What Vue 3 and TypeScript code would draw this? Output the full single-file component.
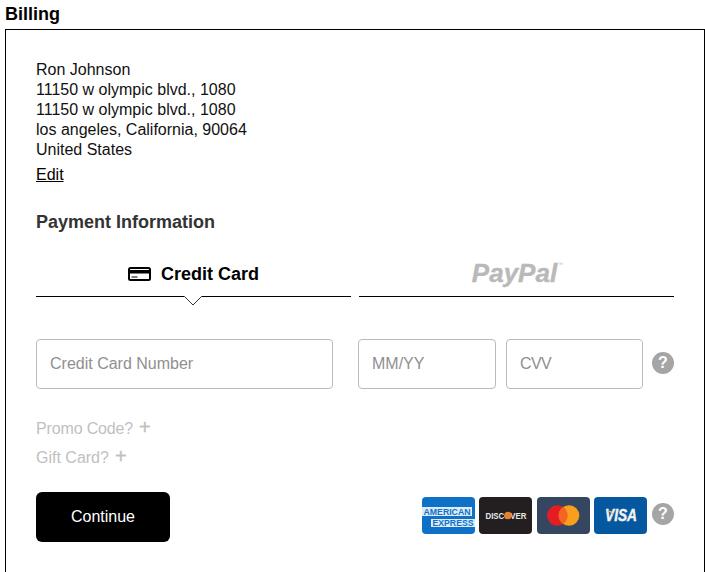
<script setup lang="ts">
const address: string[] = [
  'Ron Johnson',
  '11150 w olympic blvd., 1080',
  '11150 w olympic blvd., 1080',
  'los angeles, California, 90064',
  'United States',
]
</script>

<template>
  <div class="page">
    <h1 class="title">Billing</h1>
    <section class="box">
      <div class="address">
        <div v-for="(line, i) in address" :key="i">{{ line }}</div>
      </div>
      <a class="edit">Edit</a>
      <h2 class="subtitle">Payment Information</h2>

      <div class="tabs">
        <div class="tab active">
          <svg class="card-icon" width="23" height="14" viewBox="0 0 23 14">
            <rect x="1" y="1" width="21" height="12" rx="1.5" fill="#fff" stroke="#000" stroke-width="2" />
            <rect x="1" y="3" width="21" height="3.5" fill="#000" />
            <rect x="3.5" y="9.5" width="6" height="1" fill="#000" />
          </svg>
          <span>Credit Card</span>
          <svg class="caret" width="18" height="10" viewBox="0 0 18 10">
            <path d="M0 0 L9 9 L18 0" fill="#fff" stroke="none" />
            <path d="M0.5 0.5 L9 9 L17.5 0.5" fill="none" stroke="#333" stroke-width="1" />
          </svg>
        </div>
        <div class="tab">
          <span class="paypal">PayPal</span><span class="tm">™</span>
        </div>
      </div>

      <div class="fields">
        <div class="input number">Credit Card Number</div>
        <div class="input expiry">MM/YY</div>
        <div class="input cvv"><span class="cvv-text">CVV</span></div>
        <span class="help">?</span>
      </div>

      <div class="extra first"><span class="promo">Promo Code?</span><span class="plus">+</span></div>
      <div class="extra"><span>Gift Card?</span><span class="plus">+</span></div>

      <div class="footer">
        <button class="continue" type="button">Continue</button>
        <div class="cards">
          <svg class="pay" width="53" height="37" viewBox="0 0 53 37">
            <rect width="53" height="37" rx="4" fill="#0f70c8" />
            <rect x="0" y="10" width="50" height="9" fill="#dcebf8" />
            <text x="25" y="17.800" text-anchor="middle" class="amex" textLength="47" lengthAdjust="spacingAndGlyphs">AMERICAN</text>
            <rect x="9" y="22" width="44" height="8" fill="#dcebf8" />
            <text x="31" y="29.200" text-anchor="middle" class="amex" textLength="41" lengthAdjust="spacingAndGlyphs">EXPRESS</text>
          </svg>
          <svg class="pay" width="53" height="37" viewBox="0 0 53 37">
            <rect width="53" height="37" rx="4" fill="#231f20" />
            <text x="27" y="21.800" text-anchor="middle" class="disc" textLength="41" lengthAdjust="spacingAndGlyphs">DISCOVER</text>
            <circle cx="29" cy="18.500" r="3.700" fill="#e9812b" />
          </svg>
          <svg class="pay" width="53" height="37" viewBox="0 0 53 37">
            <rect width="53" height="37" rx="4" fill="#354760" />
            <circle cx="20.300" cy="18.500" r="10.300" fill="#e61c24" />
            <circle cx="32" cy="18.500" r="10.300" fill="#f99f1b" />
            <path d="M26.150 10a10.300 10.300 0 0 1 0 17a10.300 10.300 0 0 1 0-17z" fill="#f26522" />
          </svg>
          <svg class="pay" width="53" height="37" viewBox="0 0 53 37">
            <rect width="53" height="37" rx="4" fill="#05589f" />
            <text x="27" y="24.300" text-anchor="middle" class="visa" textLength="32" lengthAdjust="spacingAndGlyphs">VISA</text>
            <path d="M10.500 13.800 C14 13.800 17.500 15.200 19.500 19 L18 14.800 C17.600 14 16.800 13.800 15.800 13.800z" fill="#e0b060" />
          </svg>
          <span class="help after-cards">?</span>
        </div>
      </div>
    </section>
  </div>
</template>

<style>
html, body { margin: 0; background: #fff; overflow: hidden; }
</style>

<style scoped>
.page {
  height: 572px;
  overflow: hidden;
  padding-left: 5px;
  box-sizing: border-box;
  font-family: "Liberation Sans", Arial, sans-serif;
  color: #000;
}
.title {
  margin: 0;
  padding-top: 4px;
  font-size: 18px;
  line-height: 21px;
  height: 25px;
  font-weight: 700;
}
.box {
  width: 700px;
  box-sizing: border-box;
  border: 1px solid #000;
  padding: 30px 30px 40px;
}
.address {
  font-size: 16px;
  line-height: 20px;
  color: #111;
}
.edit {
  display: inline-block;
  margin-top: 5px;
  font-size: 16px;
  line-height: 20px;
  text-decoration: underline;
  color: #000;
}
.subtitle {
  margin: 26px 0 0;
  font-size: 18px;
  line-height: 22px;
  font-weight: 700;
  color: #333;
}
.tabs {
  display: flex;
  gap: 8px;
  margin-top: 15px;
  width: 638px;
}
.tab {
  position: relative;
  flex: 1;
  height: 44px;
  padding-top: 4px;
  border-bottom: 1px solid #000;
  display: flex;
  align-items: center;
  justify-content: center;
  font-size: 18px;
  font-weight: 700;
}
.card-icon { margin-right: 10px; }
.caret {
  position: absolute;
  left: 148px;
  top: 48px;
}
.paypal {
  font-size: 26px;
  font-style: italic;
  font-weight: 700;
  color: #b9b9b9;
  position: relative;
  top: -1px;
  left: -2px;
  -webkit-text-stroke: 0.4px #b9b9b9;
}
.tm {
  position: absolute;
  left: 199px;
  top: 13px;
  font-size: 5px;
  font-weight: 400;
  line-height: 6px;
  color: #b9b9b9;
}
.fields {
  display: flex;
  align-items: center;
  margin-top: 42px;
  width: 638px;
}
.input {
  height: 50px;
  box-sizing: border-box;
  border: 1px solid #bbb;
  border-radius: 4px;
  padding: 0 13px;
  display: flex;
  align-items: center;
  font-size: 16px;
  color: #8f8f8f;
}
.number { width: 297px; margin-right: 25px; }
.expiry { width: 138px; margin-right: 10px; }
.cvv { width: 137px; margin-right: 9px; }
.cvv-text { letter-spacing: -0.6px; }
.help {
  width: 22px;
  height: 22px;
  margin-bottom: 2px;
  border-radius: 50%;
  background: #a5a5a5;
  color: #fff;
  font-size: 16px;
  font-weight: 700;
  display: inline-flex;
  align-items: center;
  justify-content: center;
  flex: none;
}
.extra {
  display: flex;
  align-items: center;
  gap: 6px;
  height: 20px;
  font-size: 16px;
  line-height: 20px;
  color: #c0c0c0;
  margin-top: 9px;
}
.extra.first { margin-top: 30px; }
.promo { letter-spacing: -0.15px; }
.plus {
  font-size: 20px;
  line-height: 20px;
  position: relative;
  top: -2px;
  -webkit-text-stroke: 0.3px #c0c0c0;
}
.footer {
  display: flex;
  justify-content: space-between;
  align-items: flex-start;
  width: 638px;
  margin-top: 24px;
}
.continue {
  width: 134px;
  height: 50px;
  border: 0;
  border-radius: 6px;
  background: #000;
  color: #fff;
  font-family: inherit;
  font-size: 16px;
  padding: 0;
}
.cards {
  display: flex;
  align-items: center;
  gap: 4.5px;
  margin-top: 5px;
}
.pay { display: block; }
.after-cards { margin-left: 0.5px; margin-bottom: 3px; }
.amex {
  font-family: "Liberation Sans", Arial, sans-serif;
  font-size: 9px;
  font-weight: 700;
  fill: #0f70c8;
}
.disc {
  font-family: "Liberation Sans", Arial, sans-serif;
  font-size: 9px;
  font-weight: 700;
  fill: #e8e8e8;
}
.visa {
  font-family: "Liberation Sans", Arial, sans-serif;
  font-size: 16px;
  font-weight: 700;
  font-style: italic;
  fill: #f4f4f4;
  stroke: #f4f4f4;
  stroke-width: 0.4px;
}
</style>
